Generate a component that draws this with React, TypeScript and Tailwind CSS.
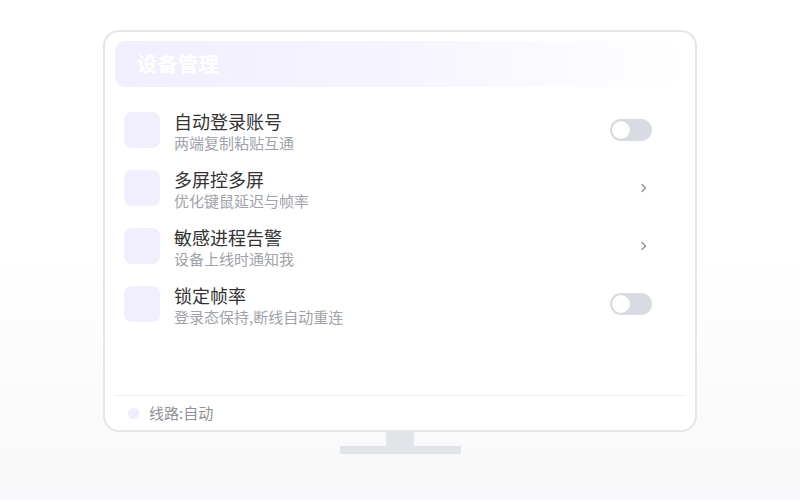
import React from 'react';

type Row = {
  title: string;
  desc: string;
  kind: 'toggle' | 'arrow';
};

const rows: Row[] = [
  { title: '自动登录账号', desc: '两端复制粘贴互通', kind: 'toggle' },
  { title: '多屏控多屏', desc: '优化键鼠延迟与帧率', kind: 'arrow' },
  { title: '敏感进程告警', desc: '设备上线时通知我', kind: 'arrow' },
  { title: '锁定帧率', desc: '登录态保持,断线自动重连', kind: 'toggle' },
];

const Toggle: React.FC = () => (
  <div className="w-[42px] h-[22px] rounded-full bg-[#d8dbe1] p-[2px] flex items-center">
    <div className="w-[18px] h-[18px] rounded-full bg-white shadow-[0_0_0_0.5px_#cfd2d8]" />
  </div>
);

const Chevron: React.FC = () => (
  <svg width="8" height="12" viewBox="0 0 8 12" className="mr-[4px]">
    <path d="M2 2.5 L5.5 6 L2 9.5" fill="none" stroke="#8a909c" strokeWidth="1.4" strokeLinecap="round" strokeLinejoin="round" />
  </svg>
);

const App: React.FC = () => {
  return (
    <div
      className="w-[800px] h-[500px] bg-gradient-to-b from-white via-white to-[#f8f8fa] flex flex-col items-center pt-[30px]"
      style={{ fontFamily: '"Noto Sans CJK SC", "Noto Sans", sans-serif' }}
    >
      <div className="w-[594px] h-[402px] rounded-[16px] border-2 border-[#e4e6ea] bg-white flex flex-col px-[10px] pt-[9px]">
        <div className="h-[46px] rounded-[10px] bg-gradient-to-r from-[#f1efff] via-[#f6f4ff] to-white flex items-center justify-between pl-[22px] pr-[20px]">
          <span className="text-[20px] font-bold text-white tracking-[0.5px]">设备管理</span>
          <div className="flex gap-[6px]">
            <span className="w-[4px] h-[4px] rounded-full bg-white" />
            <span className="w-[4px] h-[4px] rounded-full bg-white" />
            <span className="w-[4px] h-[4px] rounded-full bg-white" />
          </div>
        </div>

        <div className="flex-1 flex flex-col pt-[25px] pl-[9px] pr-[33px]">
          {rows.map((r) => (
            <div key={r.title} className="h-[58px] flex items-start">
              <div className="w-[36px] h-[36px] rounded-[8px] bg-[#f1eefd]" />
              <div className="flex-1 ml-[14px] flex flex-col -mt-[2px]">
                <span className="text-[18px] leading-[23px] text-[#333333]">{r.title}</span>
                <span className="text-[15px] leading-[20px] text-[#a0a3a9]">{r.desc}</span>
              </div>
              <div className="h-[36px] flex items-center">
                {r.kind === 'toggle' ? <Toggle /> : <Chevron />}
              </div>
            </div>
          ))}
        </div>

        <div className="h-[35px] border-t border-[#eeeff2] flex items-center pl-[13px]">
          <span className="w-[11px] h-[11px] rounded-full bg-[#efecfc]" />
          <span className="ml-[10px] text-[15px] text-[#8f9197]">线路:自动</span>
        </div>
      </div>
      <div className="w-[28px] h-[14px] bg-[#e1e4e8]" />
      <div className="w-[121px] h-[8px] bg-[#e1e4e8]" />
    </div>
  );
};

export default App;
